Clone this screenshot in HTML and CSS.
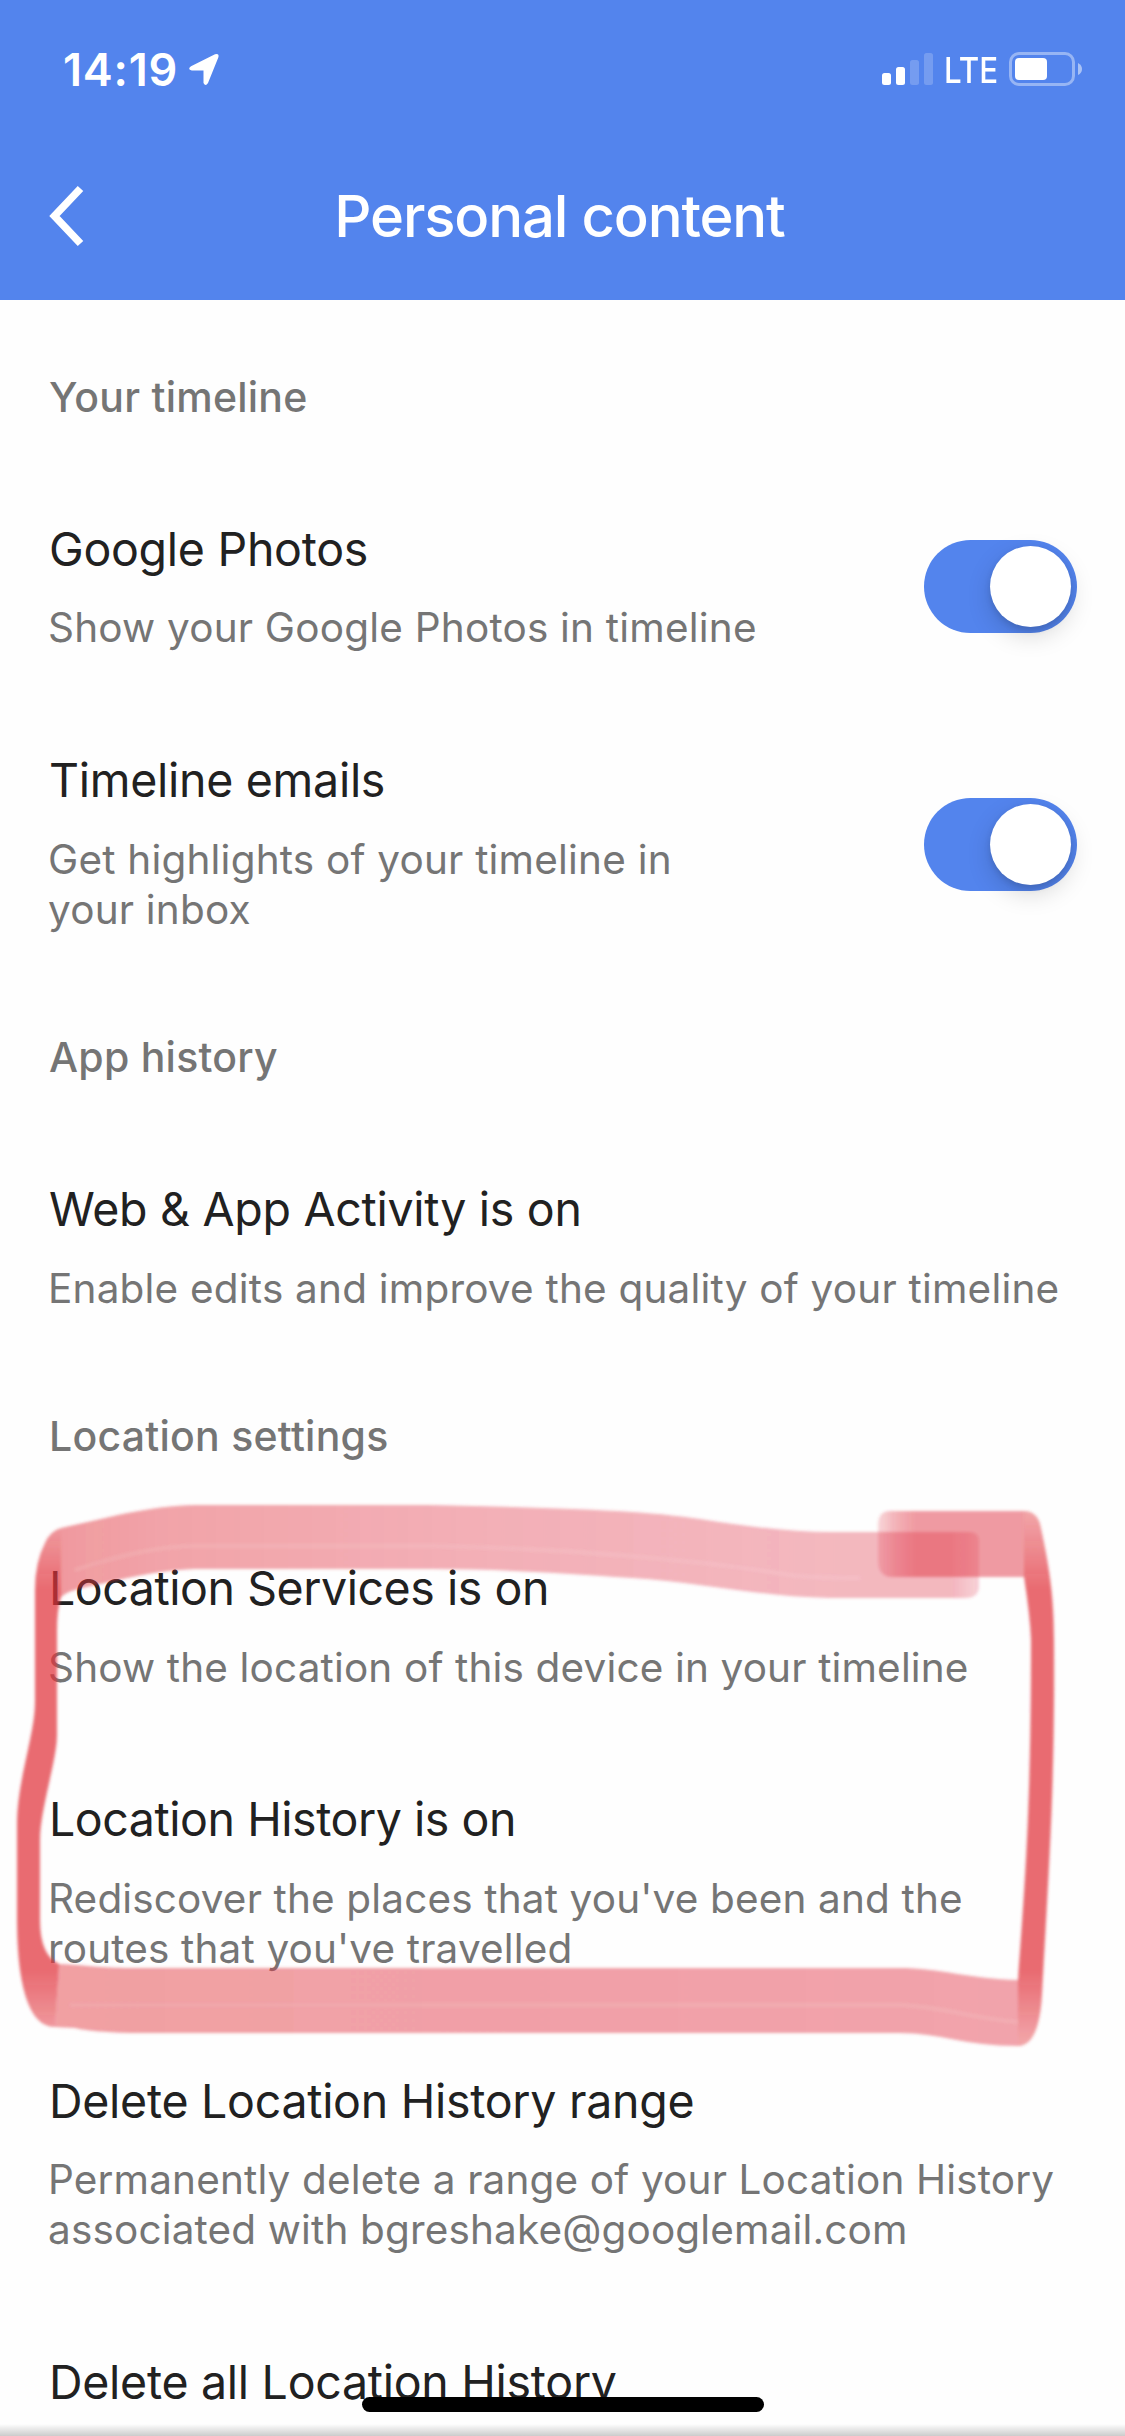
FILE: index.html
```html
<!DOCTYPE html>
<html lang="en">
<head>
<meta charset="utf-8">
<title>Personal content</title>
<link rel="stylesheet" href="styles.css">
</head>
<body>
<div class="screen">
  <header class="header">
    <div class="status">
      <div class="status-left">
        <span class="time">14:19</span>
        <svg class="location" width="32" height="34" viewBox="0 0 32 34"><path d="M3 14.200 27 2.300Q31.600 .8 30.300 5.500L20 31Q17.500 35 15.500 31V18.500H3.800Q-1 17.300 3 14.200Z" fill="#fff"/></svg>
      </div>
      <div class="status-right">
        <svg width="52" height="34" viewBox="0 0 52 34" fill="#fff"><rect x="0" y="21" width="9" height="12" rx="2.500"/><rect x="14" y="15" width="9" height="18" rx="2.500"/><rect x="28" y="8" width="9" height="25" rx="2.500" opacity=".2"/><rect x="42" y="1" width="9" height="32" rx="2.500" opacity=".2"/></svg>
        <span class="network">LTE</span>
        <svg class="battery" width="74" height="34" viewBox="0 0 74 34"><rect x="1.500" y="1.500" width="63" height="31" rx="8.500" fill="none" stroke="#fff" stroke-width="3" opacity=".4"/><rect x="6" y="6" width="32" height="22" rx="4" fill="#fff"/><path d="M69 11Q73 13 73 17T69 23Z" fill="#fff" opacity=".5"/></svg>
      </div>
    </div>
    <div class="navbar">
      <svg class="back" width="36" height="62" viewBox="0 0 36 62"><path d="M32.500 3.500 6.500 31 32.500 58.500" fill="none" stroke="#fff" stroke-width="7.600"/></svg>
      <h1 class="title">Personal content</h1>
    </div>
  </header>

  <main class="list">
    <h2 class="section">Your timeline</h2>
    <div class="row">
      <div class="text"><div class="name">Google Photos</div><div class="desc">Show your Google Photos in timeline</div></div>
      <div class="toggle"><span class="knob"></span></div>
    </div>
    <div class="row">
      <div class="text"><div class="name">Timeline emails</div><div class="desc">Get highlights of your timeline in<br>your inbox</div></div>
      <div class="toggle toggle-low"><span class="knob"></span></div>
    </div>
    <h2 class="section">App history</h2>
    <div class="row">
      <div class="text"><div class="name">Web &amp; App Activity is on</div><div class="desc">Enable edits and improve the quality of your timeline</div></div>
    </div>
    <h2 class="section">Location settings</h2>
    <div class="row tight">
      <div class="text"><div class="name">Location Services is on</div><div class="desc">Show the location of this device in your timeline</div></div>
    </div>
    <div class="row tight">
      <div class="text"><div class="name">Location History is on</div><div class="desc">Rediscover the places that you've been and the<br>routes that you've travelled</div></div>
    </div>
    <div class="row">
      <div class="text"><div class="name">Delete Location History range</div><div class="desc desc-tight">Permanently delete a range of your Location History<br>associated with bgreshake@googlemail.com</div></div>
    </div>
    <div class="row">
      <div class="text"><div class="name">Delete all Location History</div></div>
    </div>
  </main>

  <svg class="marker" width="1125" height="600" viewBox="0 1480 1125 600">
    <defs>
      <filter id="soft" x="-5%" y="-5%" width="110%" height="110%"><feGaussianBlur stdDeviation="1.600"/></filter>
      <linearGradient id="top" gradientUnits="userSpaceOnUse" x1="50" y1="0" x2="980" y2="0"><stop offset="0" stop-color="#e1353f" stop-opacity=".5"/><stop offset=".12" stop-color="#e1353f" stop-opacity=".45"/><stop offset=".45" stop-color="#e1374a" stop-opacity=".4"/><stop offset=".85" stop-color="#e13750" stop-opacity=".36"/><stop offset=".97" stop-color="#e13750" stop-opacity=".36"/><stop offset="1" stop-color="#e13750" stop-opacity=".22"/></linearGradient>
      <linearGradient id="bottom" gradientUnits="userSpaceOnUse" x1="50" y1="0" x2="1030" y2="0"><stop offset="0" stop-color="#e1353f" stop-opacity=".48"/><stop offset="1" stop-color="#e13745" stop-opacity=".45"/></linearGradient>
      <linearGradient id="tail" gradientUnits="userSpaceOnUse" x1="876" y1="0" x2="915" y2="0"><stop offset="0" stop-color="#e13745" stop-opacity=".18"/><stop offset=".5" stop-color="#e13745" stop-opacity=".38"/><stop offset="1" stop-color="#e13745" stop-opacity=".5"/></linearGradient>
      <linearGradient id="side" gradientUnits="userSpaceOnUse" x1="0" y1="1515" x2="0" y2="2040"><stop offset="0" stop-color="#e1323b" stop-opacity=".45"/><stop offset=".14" stop-color="#e1323b" stop-opacity=".72"/><stop offset=".87" stop-color="#e1323b" stop-opacity=".72"/><stop offset="1" stop-color="#e1323b" stop-opacity=".45"/></linearGradient>
    </defs>
    <g filter="url(#soft)">
      <path fill="url(#top)" d="M61 1528 C80 1524 100 1519 118 1515 Q165 1505 195 1505 H429 C560 1508 640 1510 700 1519 Q780 1532 830 1532 H970 Q979 1532 979 1542 V1588 Q978 1598 965 1598 H830 C760 1597 700 1582 632 1578 C560 1573 500 1569 429 1569 H195 Q160 1570 114 1581 L82 1588 Q68 1591 61 1597 Z"/>
      <path fill="url(#side)" d="M61 1528 Q50 1531 45 1543 Q35 1562 35 1590 V1702 C35 1735 17 1780 17 1825 V1917 C17 1980 27 2027 55 2027 L59 1964 Q40 1955 40 1920 V1840 C40 1810 57 1760 57 1735 V1630 Q57 1610 61 1597 Z"/>
      <path fill="url(#bottom)" d="M59 1964 C85 1965 100 1968 130 1968 H899 C940 1968 970 1979 1018 1980 V2046 C965 2046 940 2033 899 2033 H130 Q90 2032 75 2028 L55 2027 Z"/>
      <path fill="url(#tail)" d="M890 1511 H1024 V1577 H892 Q879 1577 878 1562 V1525 Q878 1511 890 1511 Z"/>
      <path fill="url(#side)" d="M1024 1511 Q1038 1511 1041 1528 C1050 1570 1054 1600 1054 1640 C1055 1780 1050 1850 1042 1995 Q1039 2046 1018 2046 V1980 C1026 1870 1031 1800 1031 1640 Q1030 1615 1024 1577 Z"/>
      <g fill="none" stroke="#fff" stroke-width="3" opacity=".1">
        <path d="M75 1570 C120 1555 160 1546 195 1546 H429 C560 1548 700 1560 790 1575 Q810 1578 860 1578"/>
        <path d="M70 2005 H899 C940 2006 970 2018 1018 2022"/>
      </g>
    </g>
  </svg>

  <div class="shade"></div>
  <div class="home"></div>
</div>
</body>
</html>
```
FILE: styles.css
```css
body {
  margin: 0;
  background: #fff;
  font-family: Inter, "Liberation Sans", sans-serif;
}

.screen {
  position: relative;
  width: 1125px;
  height: 2436px;
  overflow: hidden;
  background: #fefefe;
}

.header {
  height: 300px;
  background: #5384ed;
  color: #fff;
}

.status {
  display: flex;
  justify-content: space-between;
  height: 132px;
  padding: 0 43px 0 63px;
  box-sizing: border-box;
}

.status-left,
.status-right {
  display: flex;
  align-items: center;
  height: 138px;
}

.time {
  width: 125px;
  font-size: 45px;
  font-weight: 600;
  letter-spacing: 0.8px;
}

.status-right {
  gap: 10px;
}

.network {
  width: 55px;
  font-size: 36px;
  font-weight: 500;
  line-height: 44px;
  transform: scaleX(0.87);
  transform-origin: left;
  padding-top: 2px;
}

.battery {
  margin-right: -1px;
}

.navbar {
  display: flex;
  align-items: center;
  height: 168px;
  padding: 0 48px;
}

.title {
  flex: 1;
  margin: 0 42px 0 0;
  font-size: 58px;
  font-weight: 500;
  letter-spacing: -1.15px;
  text-align: center;
}

.list {
  display: flex;
  flex-direction: column;
  gap: 97.75px;
  padding: 72px 48px 0;
}

.section {
  margin: 0;
  padding-left: 1px;
  font-size: 41px;
  font-weight: 500;
  line-height: 50px;
  letter-spacing: 0.25px;
  color: #757575;
}

.row {
  display: flex;
  align-items: center;
  justify-content: space-between;
}

.name {
  padding-left: 1px;
  font-size: 46.5px;
  line-height: 58px;
  letter-spacing: -0.28px;
  color: #212121;
}

.desc {
  margin-top: 25.5px;
  font-size: 40.5px;
  line-height: 50px;
  letter-spacing: 0.2px;
  color: #757575;
  white-space: nowrap;
}

.tight .name {
  letter-spacing: -0.45px;
}

.tight .desc,
.desc-tight {
  letter-spacing: 0.15px;
}

.toggle {
  display: flex;
  align-items: center;
  justify-content: flex-end;
  width: 153px;
  height: 93px;
  padding: 6px;
  box-sizing: border-box;
  border-radius: 47px;
  background: #5384ed;
}

.toggle-low {
  margin-top: 4px;
}

.knob {
  width: 81px;
  height: 81px;
  border-radius: 50%;
  background: #fff;
  box-shadow: 0 9px 24px rgba(0, 0, 0, 0.15), 0 3px 6px rgba(0, 0, 0, 0.12);
}

.marker {
  position: absolute;
  left: 0;
  top: 1480px;
}

.shade {
  position: absolute;
  left: 0;
  right: 0;
  bottom: 0;
  height: 12px;
  background: linear-gradient(rgba(0, 0, 0, 0), rgba(0, 0, 0, 0.2));
}

.home {
  position: absolute;
  left: 362px;
  bottom: 24px;
  width: 402px;
  height: 15px;
  border-radius: 8px;
  background: #000;
}
```
